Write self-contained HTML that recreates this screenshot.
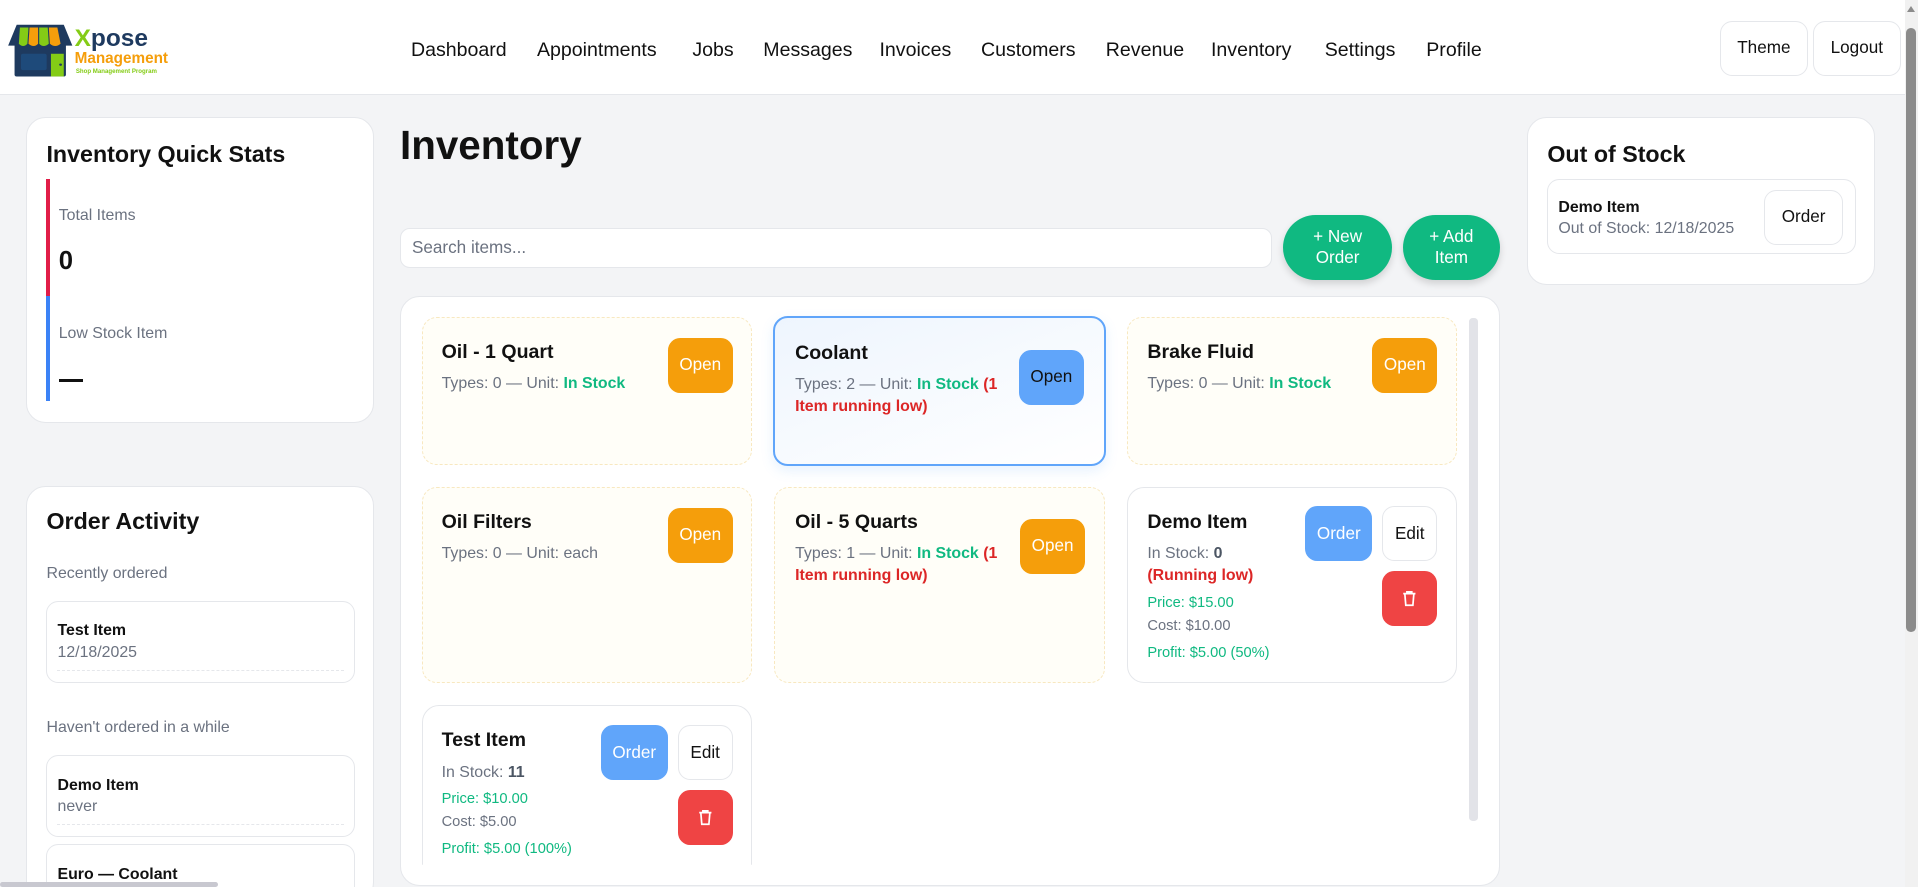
<!DOCTYPE html>
<html><head><meta charset="utf-8"><style>
html,body{margin:0;padding:0;width:1918px;height:887px;overflow:hidden;background:#f3f4f6;}
#w{zoom:1.22321;width:1568px;height:725px;position:relative;font-family:"Liberation Sans","DejaVu Sans",sans-serif;color:#111;}
.a{position:absolute;white-space:nowrap}
.card{position:absolute;background:#fff;border:1px solid #e5e7eb;border-radius:16px;box-sizing:border-box}
.t{font-weight:bold;font-size:16px;line-height:20px}
.g{color:#6b7280;font-size:13px;line-height:18px}
.grn{color:#10b981;font-weight:bold}
.red{color:#dc2626;font-weight:bold}
.btn{position:absolute;border-radius:10px;display:flex;align-items:center;justify-content:center;font-size:14px;box-sizing:border-box}
.open{background:#f59e0b;color:#fff}
.ic{position:absolute;border-radius:12px;box-sizing:border-box;border:1px dashed #f8e8c0;background:#fffef8}
.nav{top:31px;font-size:16px;line-height:20px;color:#111}
</style></head><body><div id="w">
<!-- header -->
<div class="a" style="left:0;top:0;width:1568px;height:77px;background:#fff;border-bottom:1px solid #e5e7eb"></div>
<svg class="a" style="left:5px;top:18px" width="56" height="46" viewBox="0 0 64 62" preserveAspectRatio="none">
<rect x="8" y="16" width="48" height="44" fill="#1e3a5f" rx="2"/>
<path d="M10 3 H54 L62 26 H2 Z" fill="#1e3a5f"/>
<path d="M13 6 H21 L20 24 Q16 29 12 24 Z" fill="#84cc16"/>
<path d="M22 6 H30 L30 24 Q26 29 21 24 Z" fill="#f59e0b"/>
<path d="M31 6 H39 L40 24 Q35 29 31 24 Z" fill="#84cc16"/>
<path d="M40 6 H48 L51 24 Q46 29 41 24 Z" fill="#f59e0b"/>
<rect x="14" y="35" width="24" height="18" fill="#1e4a7a" rx="2"/>
<rect x="42" y="35" width="12" height="25" fill="#84cc16"/>
<circle cx="51" cy="47" r="1.3" fill="#1e3a5f"/>
</svg>
<div class="a" style="left:61px;top:21px;font-size:20px;line-height:22px;color:#1e3a5f;font-weight:bold"><span style="color:#84cc16">X</span>pose</div>
<div class="a" style="left:61px;top:41px;font-size:12.5px;line-height:14px;color:#f59e0b;font-weight:bold">Management</div>
<div class="a" style="left:62px;top:56px;font-size:5px;line-height:7px;color:#84cc16;font-weight:bold">Shop Management Program</div>
<div class="a nav" style="left:336px">Dashboard</div>
<div class="a nav" style="left:439px">Appointments</div>
<div class="a nav" style="left:566px">Jobs</div>
<div class="a nav" style="left:624px">Messages</div>
<div class="a nav" style="left:719px">Invoices</div>
<div class="a nav" style="left:802px">Customers</div>
<div class="a nav" style="left:904px">Revenue</div>
<div class="a nav" style="left:990px">Inventory</div>
<div class="a nav" style="left:1083px">Settings</div>
<div class="a nav" style="left:1166px">Profile</div>
<div class="btn" style="left:1406px;top:17px;width:72px;height:45px;background:#fff;border:1px solid #e5e7eb">Theme</div>
<div class="btn" style="left:1482px;top:17px;width:72px;height:45px;background:#fff;border:1px solid #e5e7eb">Logout</div>
<!-- page scrollbar -->
<div class="a" style="left:1557px;top:0;width:11px;height:725px;background:#f1f1f1"></div>
<div class="a" style="left:1558px;top:23px;width:8px;height:494px;background:#8b8b8b;border-radius:4px"></div>
<div class="a" style="left:1559px;top:5px;width:0;height:0;border-left:4px solid transparent;border-right:4px solid transparent;border-bottom:5px solid #8b8b8b"></div>
<!-- left card 1 -->
<div class="card" style="left:21px;top:96px;width:285px;height:250px"></div>
<div class="a" style="left:38px;top:115px;font-size:19px;line-height:22px;font-weight:bold">Inventory Quick Stats</div>
<div class="a" style="left:38px;top:146px;width:3px;height:96px;background:#e11d48"></div>
<div class="a" style="left:38px;top:242px;width:3px;height:86px;background:#3b82f6"></div>
<div class="a g" style="left:48px;top:168px">Total Items</div>
<div class="a" style="left:48px;top:202px;font-size:21px;line-height:24px;font-weight:bold">0</div>
<div class="a g" style="left:48px;top:264px">Low Stock Item</div>
<div class="a" style="left:48px;top:310px;width:20px;height:2px;background:#111"></div>
<!-- left card 2 -->
<div class="card" style="left:21px;top:397px;width:285px;height:340px"></div>
<div class="a" style="left:38px;top:415px;font-size:19px;line-height:22px;font-weight:bold">Order Activity</div>
<div class="a g" style="left:38px;top:460px">Recently ordered</div>
<div class="card" style="left:38px;top:491px;width:252px;height:67px;border-radius:10px"></div>
<div class="a" style="left:47px;top:508px;font-size:13px;line-height:16px;font-weight:bold">Test Item</div>
<div class="a g" style="left:47px;top:525px">12/18/2025</div>
<div class="a" style="left:47px;top:548px;width:234px;border-top:1px dashed #e5e7eb"></div>
<div class="a g" style="left:38px;top:586px">Haven't ordered in a while</div>
<div class="card" style="left:38px;top:617px;width:252px;height:67px;border-radius:10px"></div>
<div class="a" style="left:47px;top:634px;font-size:13px;line-height:16px;font-weight:bold">Demo Item</div>
<div class="a g" style="left:47px;top:651px">never</div>
<div class="a" style="left:47px;top:674px;width:234px;border-top:1px dashed #e5e7eb"></div>
<div class="card" style="left:38px;top:690px;width:252px;height:67px;border-radius:10px"></div>
<div class="a" style="left:47px;top:707px;font-size:13px;line-height:16px;font-weight:bold">Euro — Coolant</div>
<div class="a" style="left:0;top:721px;width:178px;height:4px;background:#c8c8d0;border-radius:2px"></div>
<!-- main -->
<div class="a" style="left:327px;top:100px;font-size:33px;line-height:38px;font-weight:bold">Inventory</div>
<div class="a" style="left:327px;top:186px;width:713px;height:33px;background:#fff;border:1px solid #e5e7eb;border-radius:8px;box-sizing:border-box;font-size:14px;line-height:31px;padding-left:9px;color:#6b7280">Search items...</div>
<div class="btn" style="left:1049px;top:176px;width:89px;height:53px;border-radius:27px;background:#10b981;color:#fff;text-align:center;line-height:17px;box-shadow:0 3px 6px rgba(0,0,0,.15)">+ New<br>Order</div>
<div class="btn" style="left:1147px;top:176px;width:79px;height:53px;border-radius:27px;background:#10b981;color:#fff;text-align:center;line-height:17px;box-shadow:0 3px 6px rgba(0,0,0,.15)">+ Add<br>Item</div>
<div class="card" style="left:327px;top:242px;width:899px;height:482px"></div>
<div class="a" style="left:1201px;top:260px;width:7px;height:411px;background:#e2e3e8;border-radius:3px"></div>
<!-- row1 -->
<div class="ic" style="left:345px;top:259px;width:270px;height:121px"></div>
<div class="a t" style="left:361px;top:278px">Oil - 1 Quart</div>
<div class="a g" style="left:361px;top:305px">Types: 0 — Unit: <span class="grn">In Stock</span></div>
<div class="btn open" style="left:546px;top:276px;width:53px;height:45px">Open</div>
<div class="a" style="left:632px;top:258px;width:272px;height:123px;border:2px solid #60a5fa;border-radius:12px;box-sizing:border-box;background:linear-gradient(160deg,#eef5fe,#fff);box-shadow:0 4px 10px rgba(96,165,250,.15)"></div>
<div class="a t" style="left:650px;top:279px">Coolant</div>
<div class="a g" style="left:650px;top:306px;line-height:18px">Types: 2 — Unit: <span class="grn">In Stock</span> <span class="red">(1<br>Item running low)</span></div>
<div class="btn" style="left:833px;top:286px;width:53px;height:45px;background:#60a5fa;color:#111">Open</div>
<div class="ic" style="left:921px;top:259px;width:270px;height:121px"></div>
<div class="a t" style="left:938px;top:278px">Brake Fluid</div>
<div class="a g" style="left:938px;top:305px">Types: 0 — Unit: <span class="grn">In Stock</span></div>
<div class="btn open" style="left:1122px;top:276px;width:53px;height:45px">Open</div>
<!-- row2 -->
<div class="ic" style="left:345px;top:398px;width:270px;height:160px"></div>
<div class="a t" style="left:361px;top:417px">Oil Filters</div>
<div class="a g" style="left:361px;top:444px">Types: 0 — Unit: each</div>
<div class="btn open" style="left:546px;top:415px;width:53px;height:45px">Open</div>
<div class="ic" style="left:633px;top:398px;width:270px;height:160px"></div>
<div class="a t" style="left:650px;top:417px">Oil - 5 Quarts</div>
<div class="a g" style="left:650px;top:444px">Types: 1 — Unit: <span class="grn">In Stock</span> <span class="red">(1<br>Item running low)</span></div>
<div class="btn open" style="left:834px;top:424px;width:53px;height:45px">Open</div>
<div class="card" style="left:921px;top:398px;width:270px;height:160px;border-radius:14px"></div>
<div class="a t" style="left:938px;top:417px">Demo Item</div>
<div class="a g" style="left:938px;top:444px">In Stock: <b style="color:#4b5563">0</b></div>
<div class="a red" style="left:938px;top:462px;font-size:13px;line-height:18px">(Running low)</div>
<div class="a g" style="left:938px;top:484px;font-size:12px;color:#10b981">Price: $15.00</div>
<div class="a g" style="left:938px;top:503px;font-size:12px">Cost: $10.00</div>
<div class="a g" style="left:938px;top:525px;font-size:12px;color:#10b981">Profit: $5.00 (50%)</div>
<div class="btn" style="left:1067px;top:414px;width:55px;height:45px;background:#60a5fa;color:#fff">Order</div>
<div class="btn" style="left:1130px;top:414px;width:45px;height:45px;background:#fff;border:1px solid #e5e7eb">Edit</div>
<div class="btn" style="left:1130px;top:467px;width:45px;height:45px;background:#ef4444">
<svg width="12" height="14" viewBox="0 0 12 14" fill="none" stroke="#fff" stroke-width="1.4"><path d="M1 3h10M4 3V1.5h4V3M2.3 3l.8 9.5h5.8L9.7 3"/></svg></div>
<!-- row3 -->
<div class="card" style="left:345px;top:576px;width:270px;height:160px;border-radius:14px;clip-path:inset(0 0 29px 0)"></div>
<div class="a t" style="left:361px;top:595px">Test Item</div>
<div class="a g" style="left:361px;top:623px">In Stock: <b style="color:#4b5563">11</b></div>
<div class="a g" style="left:361px;top:644px;font-size:12px;color:#10b981">Price: $10.00</div>
<div class="a g" style="left:361px;top:663px;font-size:12px">Cost: $5.00</div>
<div class="a g" style="left:361px;top:685px;font-size:12px;color:#10b981">Profit: $5.00 (100%)</div>
<div class="btn" style="left:491px;top:593px;width:55px;height:45px;background:#60a5fa;color:#fff">Order</div>
<div class="btn" style="left:554px;top:593px;width:45px;height:45px;background:#fff;border:1px solid #e5e7eb">Edit</div>
<div class="btn" style="left:554px;top:646px;width:45px;height:45px;background:#ef4444">
<svg width="12" height="14" viewBox="0 0 12 14" fill="none" stroke="#fff" stroke-width="1.4"><path d="M1 3h10M4 3V1.5h4V3M2.3 3l.8 9.5h5.8L9.7 3"/></svg></div>
<!-- right card -->
<div class="card" style="left:1248px;top:96px;width:285px;height:137px"></div>
<div class="a" style="left:1265px;top:115px;font-size:19px;line-height:22px;font-weight:bold">Out of Stock</div>
<div class="card" style="left:1265px;top:146px;width:252px;height:62px;border-radius:10px"></div>
<div class="a" style="left:1274px;top:162px;font-size:13px;line-height:16px;font-weight:bold">Demo Item</div>
<div class="a g" style="left:1274px;top:178px">Out of Stock: 12/18/2025</div>
<div class="btn" style="left:1442px;top:155px;width:65px;height:45px;background:#fff;border:1px solid #e5e7eb">Order</div>
</div></body></html>
